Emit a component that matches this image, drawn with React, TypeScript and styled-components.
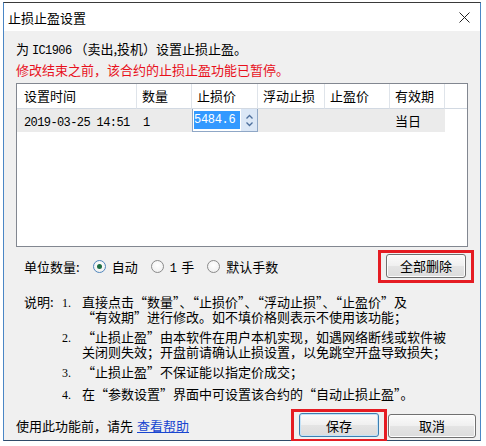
import React from "react";
import styled, { createGlobalStyle } from "styled-components";

const GlobalStyle = createGlobalStyle`
  html, body {
    margin: 0;
    padding: 0;
    background: #ffffff;
  }
  body {
    font-family: "Noto Sans CJK SC", "Liberation Sans", sans-serif;
    font-size: 13px;
    color: #000;
  }
`;

const Window = styled.div`
  margin: 2px 0 0 3px;
  width: 478px;
  height: 439px;
  box-sizing: border-box;
  border: 1px solid #4a86c5;
  border-top-color: #3a3a3a;
  border-bottom-color: #2f4a68;
  background: #f0f0f0;
  display: flex;
  flex-direction: column;
`;

const TitleBar = styled.div`
  height: 28px;
  flex: none;
  background: #ffffff;
  display: flex;
  align-items: center;
  justify-content: space-between;
  padding: 0 10px 0 4px;
  font-size: 13px;
`;

const Body = styled.div`
  flex: 1;
  padding: 7px 12px 0 12px;
  display: flex;
  flex-direction: column;
`;

const Line = styled.div<{ $warn?: boolean }>`
  height: 21px;
  line-height: 21px;
  white-space: nowrap;
  color: ${(p) => (p.$warn ? "#e8101c" : "#000")};
`;

const Mono = styled.span`
  font-family: "Liberation Mono", monospace;
  font-size: 12px;
  letter-spacing: -0.6px;
`;

const Table = styled.div`
  margin-top: 3px;
  height: 164px;
  box-sizing: border-box;
  border: 1px solid #828790;
  background: #ffffff;
  display: grid;
  grid-template-columns: 120px 55px 66px 67px 65px 55px 1fr;
  grid-template-rows: 25px 23px;
  align-content: start;
`;

const HeadCell = styled.div<{ $pad?: number }>`
  box-sizing: border-box;
  border-right: 1px solid #dfe4ea;
  border-bottom: 1px solid #d2d9e2;
  padding-left: ${(p) => p.$pad ?? 6}px;
  line-height: 24px;
  white-space: nowrap;
  &:nth-child(7) {
    border-right: none;
  }
`;

const DataCell = styled.div<{ $blank?: boolean; $pad?: number }>`
  background: ${(p) => (p.$blank ? "#ffffff" : "#ebebeb")};
  padding-left: ${(p) => p.$pad ?? 6}px;
  line-height: 23px;
  white-space: nowrap;
`;

const SpinInput = styled.div`
  display: flex;
  box-sizing: border-box;
  border: 1px solid #8fa7c6;
  border-top: none;
  background: #ffffff;
  height: 23px;
`;

const Selected = styled.span`
  margin: 2px 0 2px 1px;
  flex: 1;
  background: #3399ff;
  color: #ffffff;
  font-family: "Liberation Mono", monospace;
  font-size: 12px;
  letter-spacing: -0.3px;
  line-height: 18px;
`;

const Spinner = styled.div`
  width: 16px;
  margin-left: 1px;
  background: #dbe7f6;
  display: flex;
  align-items: center;
  justify-content: center;
`;

const UnitRow = styled.div`
  margin-top: 3px;
  height: 32px;
  display: flex;
  align-items: center;
  padding-left: 8px;
`;

const Label = styled.span`
  margin-right: 13px;
`;

const Radio = styled.label`
  display: inline-flex;
  align-items: center;
  gap: 6px;
  margin-right: 13px;
  white-space: nowrap;
`;

const RadioDot = styled.span<{ $checked?: boolean }>`
  width: 13px;
  height: 13px;
  box-sizing: border-box;
  border-radius: 50%;
  border: 1px solid ${(p) => (p.$checked ? "#4f86bd" : "#8a8a8a")};
  background: radial-gradient(circle at 50% 40%, #ffffff 0%, #ececec 100%);
  display: flex;
  align-items: center;
  justify-content: center;
  &::after {
    content: "";
    width: 5px;
    height: 5px;
    border-radius: 50%;
    background: ${(p) => (p.$checked ? "#1d6e43" : "transparent")};
  }
`;

const Unit = styled.span`
  margin-left: 5px;
`;

const Spacer = styled.div`
  flex: 1;
`;

const Highlight = styled.div<{ $shift?: number }>`
  border: 3px solid #e51c23;
  padding: 1px 5px 2px;
  margin-right: ${(p) => p.$shift ?? 0}px;
  display: flex;
`;

const Button = styled.button<{ $default?: boolean; $w: number }>`
  width: ${(p) => p.$w}px;
  height: 24px;
  box-sizing: border-box;
  padding: 0;
  border: 1px solid ${(p) => (p.$default ? "#3c7fb1" : "#707070")};
  border-radius: 3px;
  background: linear-gradient(#fbfbfb, #f0f0f0 48%, #e4e4e4 52%, #dcdcdc);
  box-shadow: inset 0 0 0 1px ${(p) => (p.$default ? "#c4e2f7" : "#fdfdfd")};
  font-family: inherit;
  font-size: 13px;
  color: #000;
`;

const Notes = styled.div`
  margin-top: 12px;
  padding-left: 8px;
  display: flex;
  flex-direction: column;
  gap: 5px;
`;

const Note = styled.div`
  display: grid;
  grid-template-columns: 38px 20px 1fr;
  align-items: baseline;
  line-height: 15px;
  white-space: nowrap;
`;

const NoteNum = styled.span`
  font-family: "Liberation Serif", serif;
  font-size: 12px;
`;

const Footer = styled.div`
  margin-top: 6px;
  height: 33px;
  display: flex;
  align-items: center;
`;

const Link = styled.a`
  color: #1846d0;
  text-decoration: underline;
  margin-left: 4px;
`;

const CancelWrap = styled.div`
  margin: 0 -8px 0 1px;
  display: flex;
`;

const notes: { label?: string; num: string; lines: string[] }[] = [
  {
    label: "说明:",
    num: "1.",
    lines: [
      "直接点击“数量”、“止损价”、“浮动止损”、“止盈价”及",
      "“有效期”进行修改。如不填价格则表示不使用该功能；",
    ],
  },
  {
    num: "2.",
    lines: [
      "“止损止盈”由本软件在用户本机实现，如遇网络断线或软件被",
      "关闭则失效；开盘前请确认止损设置，以免跳空开盘导致损失；",
    ],
  },
  { num: "3.", lines: ["“止损止盈”不保证能以指定价成交；"] },
  { num: "4.", lines: ["在“参数设置”界面中可设置该合约的“自动止损止盈”。"] },
];

const headers = ["设置时间", "数量", "止损价", "浮动止损", "止盈价", "有效期", ""];

function App() {
  return (
    <>
      <GlobalStyle />
      <Window>
        <TitleBar>
          <span>止损止盈设置</span>
          <svg width="11" height="11" viewBox="0 0 11 11">
            <path d="M0.5 0.5 L10.5 10.5 M10.5 0.5 L0.5 10.5" stroke="#222" strokeWidth="1" />
          </svg>
        </TitleBar>
        <Body>
          <Line>
            为 <Mono>IC1906</Mono> （卖出,投机）设置止损止盈。
          </Line>
          <Line $warn>修改结束之前，该合约的止损止盈功能已暂停。</Line>
          <Table>
            {headers.map((h, i) => (
              <HeadCell key={i} $pad={i === 0 ? 7 : 5}>
                {h}
              </HeadCell>
            ))}
            <DataCell $pad={7}>
              <Mono>2019-03-25 14:51</Mono>
            </DataCell>
            <DataCell>
              <Mono>1</Mono>
            </DataCell>
            <SpinInput>
              <Selected>5484.6</Selected>
              <Spinner>
                <svg width="9" height="15" viewBox="0 0 9 15">
                  <path d="M1.5 5.5 L4.5 2.5 L7.5 5.5" stroke="#4d6f9c" strokeWidth="1.3" fill="none" />
                  <path d="M1.5 9.5 L4.5 12.5 L7.5 9.5" stroke="#4d6f9c" strokeWidth="1.3" fill="none" />
                </svg>
              </Spinner>
            </SpinInput>
            <DataCell />
            <DataCell />
            <DataCell $pad={5}>当日</DataCell>
            <DataCell $blank />
          </Table>
          <UnitRow>
            <Label>单位数量:</Label>
            <Radio>
              <RadioDot $checked />
              自动
            </Radio>
            <Radio>
              <RadioDot />
              <span>
                <Mono>1</Mono>
                <Unit>手</Unit>
              </span>
            </Radio>
            <Radio>
              <RadioDot />
              默认手数
            </Radio>
            <Spacer />
            <Highlight $shift={-6}>
              <Button $w={80}>全部删除</Button>
            </Highlight>
          </UnitRow>
          <Notes>
            {notes.map((n) => (
              <Note key={n.num}>
                <span>{n.label ?? ""}</span>
                <NoteNum>{n.num}</NoteNum>
                <span>
                  {n.lines.map((l, i) => (
                    <div key={i}>{l}</div>
                  ))}
                </span>
              </Note>
            ))}
          </Notes>
          <Footer>
            <span>使用此功能前，请先</span>
            <Link href="#">查看帮助</Link>
            <Spacer />
            <Highlight>
              <Button $default $w={80}>
                保存
              </Button>
            </Highlight>
            <CancelWrap>
              <Button $w={88}>取消</Button>
            </CancelWrap>
          </Footer>
        </Body>
      </Window>
    </>
  );
}

export default App;
